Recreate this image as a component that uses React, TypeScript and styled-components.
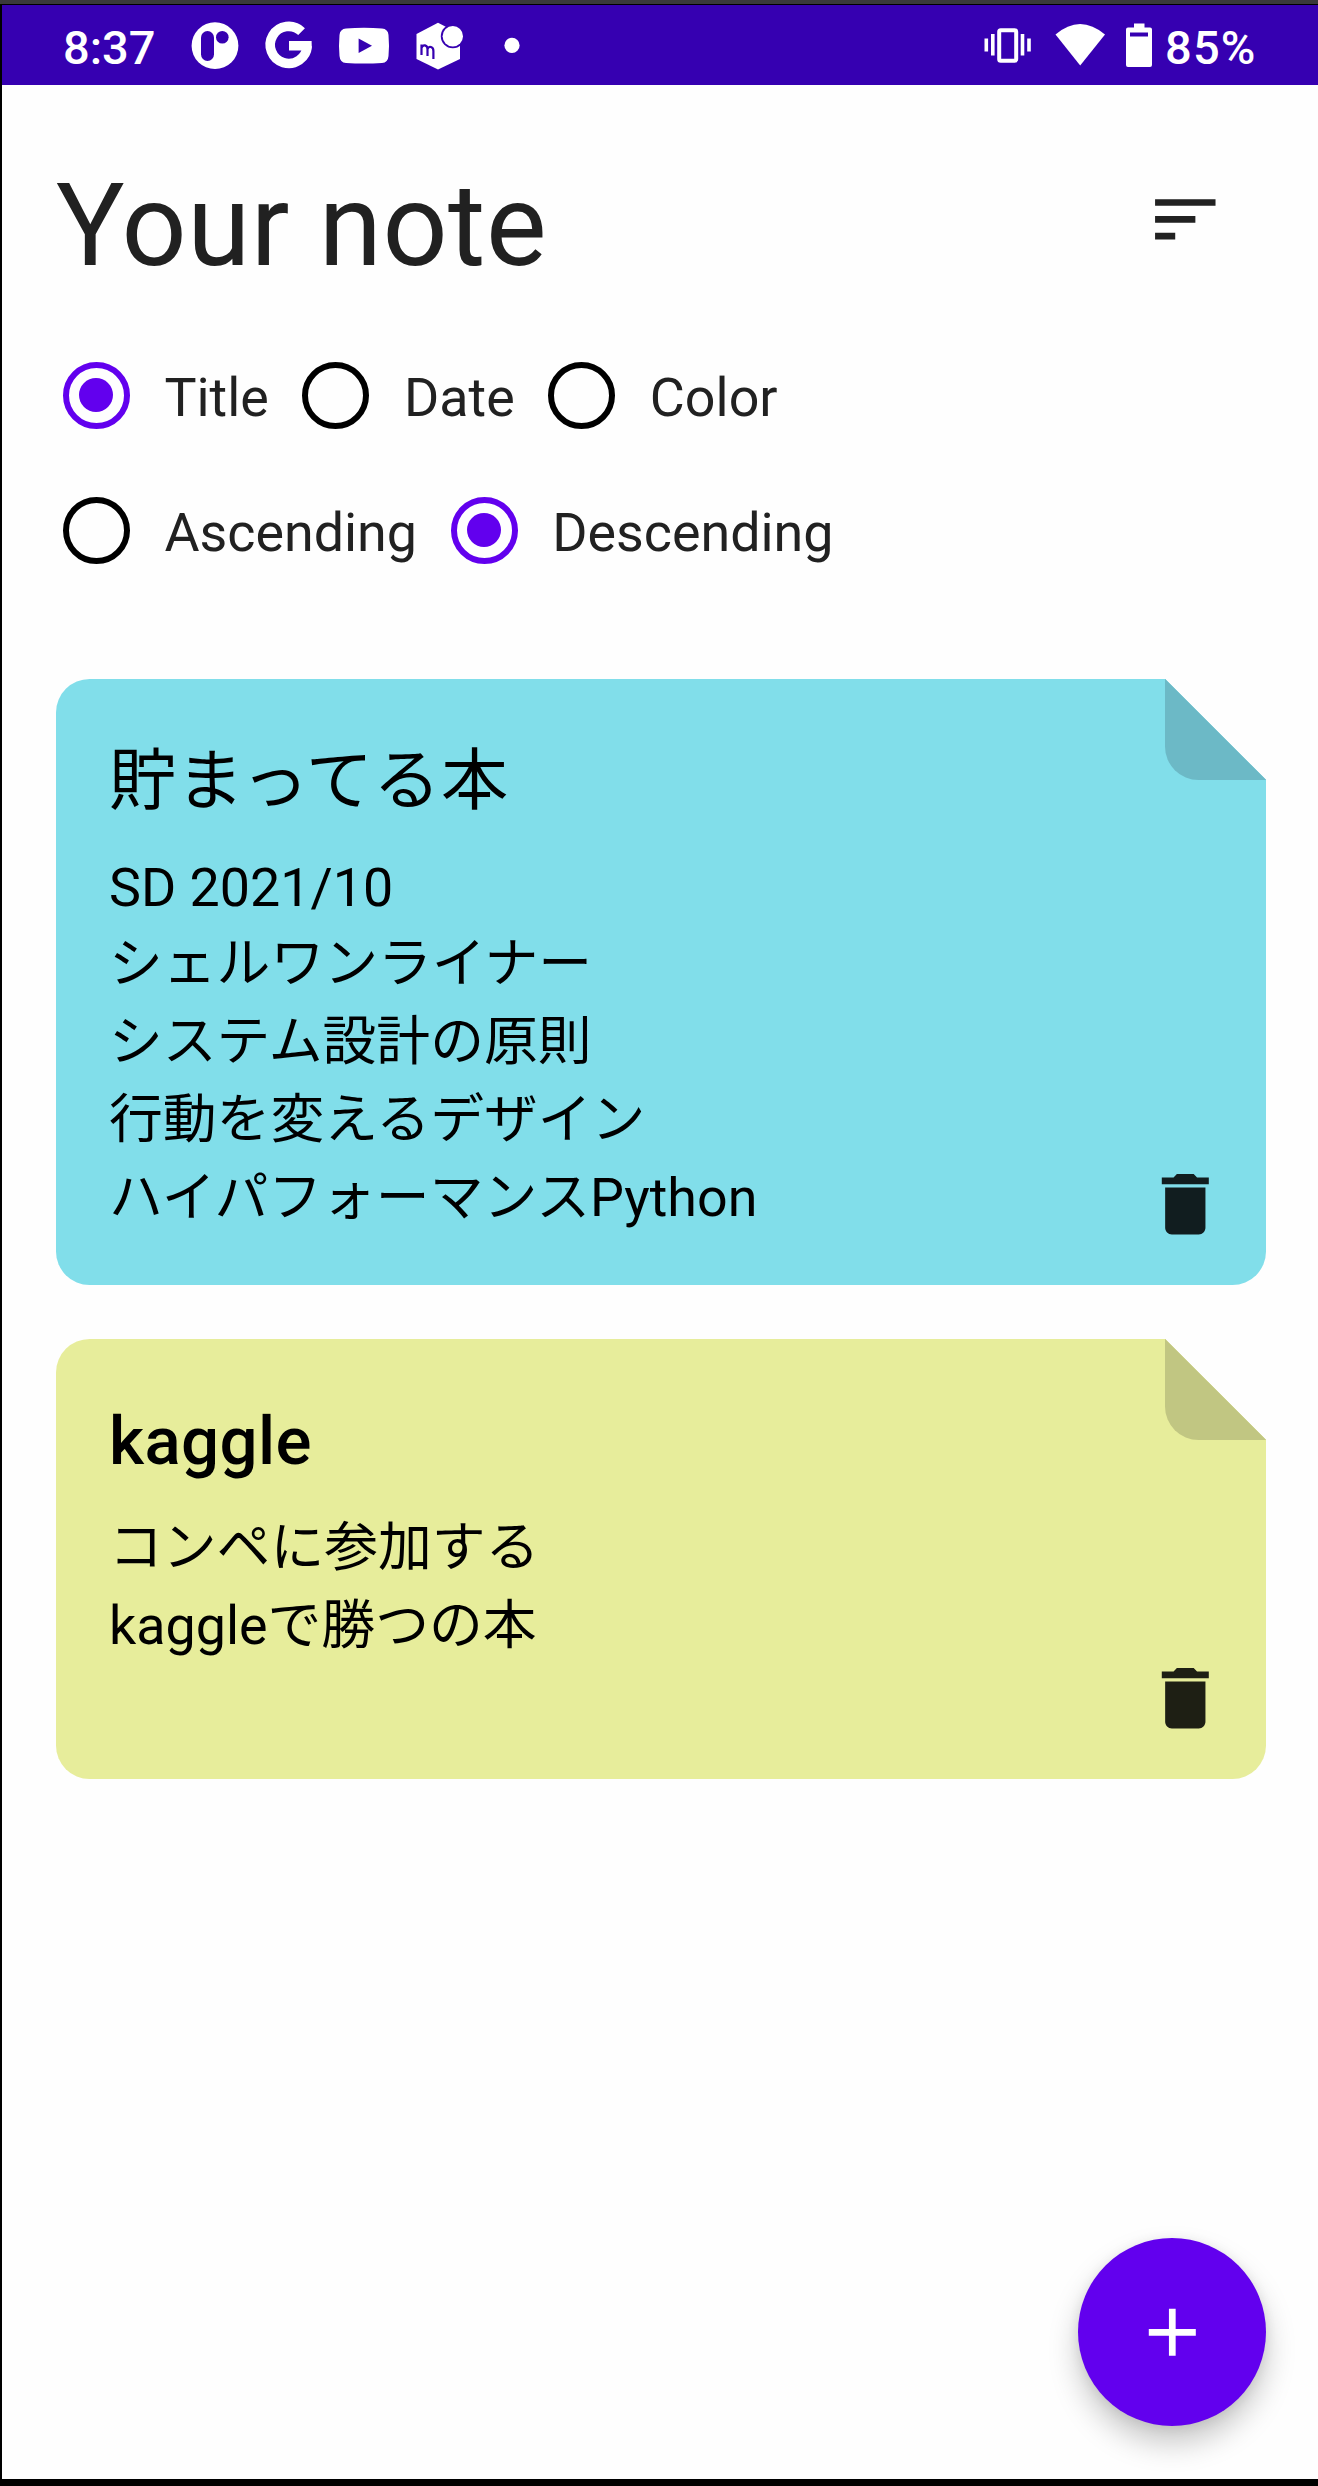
import React, { useState } from "react";
import styled, { createGlobalStyle } from "styled-components";

const GlobalStyle = createGlobalStyle`
  * { box-sizing: border-box; }
  body { margin: 0; background: #000; }
  button { border: 0; padding: 0; background: none; font: inherit; color: inherit; cursor: pointer; }
`;

const Frame = styled.div`
  width: 1318px;
  height: 2486px;
  padding: 1px 0 7px 2px;
  border-top: 4px solid #3a393b;
  background: #000;
  overflow: hidden;
  font-family: Roboto, "Noto Sans CJK JP", sans-serif;
`;

const Screen = styled.div`
  position: relative;
  display: flex;
  flex-direction: column;
  height: 2474px;
  background: #fefefe;
  color: #212121;
`;

const StatusBar = styled.header`
  display: flex;
  align-items: center;
  justify-content: space-between;
  height: 80px;
  padding: 0 60px 0 61px;
  background: #3600b1;
  color: #fff;
`;

const StatusGroup = styled.div`
  display: flex;
  align-items: center;
  svg { display: block; }
`;

const StatusText = styled.span<{ $width: number; $inset?: number }>`
  width: ${(p) => p.$width}px;
  padding: 6px 0 0 ${(p) => p.$inset ?? 0}px;
  font-size: 47px;
  line-height: 56px;
  font-weight: 500;
  letter-spacing: ${(p) => (p.$inset ? 1.2 : 0)}px;
  white-space: nowrap;
`;

const Content = styled.main`
  display: flex;
  flex-direction: column;
  padding: 72px 52px 0 54px;
`;

const TitleRow = styled.div`
  display: flex;
  justify-content: space-between;
  align-items: flex-start;
  height: 134px;
  padding: 2px 40px 0 0;
`;

const Heading = styled.h1`
  margin: 0;
  font-size: 114.3px;
  line-height: 134px;
  font-weight: 400;
  letter-spacing: 0.5px;
`;

const IconButton = styled.button`
  display: block;
  width: 80.6px;
  height: 80.6px;
  svg { display: block; width: 100%; height: 100%; }
`;

const SortButton = styled(IconButton)`
  margin-top: 20px;
`;

const SortPanel = styled.div`
  display: flex;
  flex-direction: column;
  gap: 68.2px;
  padding: 70.5px 0 0 6.8px;
`;

const RadioRow = styled.div`
  display: flex;
  gap: 33.6px;
  height: 67px;
`;

const RadioOption = styled.button`
  display: flex;
  align-items: center;
  gap: 34.6px;
  height: 67px;
`;

const RadioMark = styled.span<{ $on: boolean }>`
  display: grid;
  place-items: center;
  width: 67px;
  height: 67px;
  border: 6.8px solid ${(p) => (p.$on ? "#6200ee" : "#000")};
  border-radius: 50%;
  &::after {
    content: "";
    width: 34px;
    height: 34px;
    border-radius: 50%;
    background: ${(p) => (p.$on ? "#6200ee" : "transparent")};
  }
`;

const RadioLabel = styled.span`
  font-size: 53.8px;
  line-height: 64px;
  padding-top: 6px;
  white-space: nowrap;
`;

const NoteList = styled.div`
  display: flex;
  flex-direction: column;
  gap: 54px;
  padding-top: 115.3px;
`;

const Note = styled.article<{ $color: string; $height: number }>`
  position: relative;
  display: flex;
  justify-content: space-between;
  align-items: flex-end;
  height: ${(p) => p.$height}px;
  padding: 57px 40px 40px 53px;
  border-radius: 33.6px;
  background: ${(p) => p.$color};
  clip-path: polygon(0 0, calc(100% - 100.8px) 0, 100% 100.8px, 100% 100%, 0 100%);
`;

const Fold = styled.span<{ $color: string }>`
  position: absolute;
  top: 0;
  right: 0;
  width: 100.8px;
  height: 100.8px;
  border-bottom-left-radius: 33.6px;
  background: ${(p) => p.$color};
`;

const NoteText = styled.div`
  align-self: flex-start;
  color: #000;
`;

const NoteTitle = styled.h2<{ $weight: number }>`
  margin: 0 0 23px;
  font-size: 67.2px;
  line-height: 90px;
  font-weight: ${(p) => p.$weight};
  letter-spacing: 0.4px;
`;

const NoteLine = styled.p<{ $latin: boolean }>`
  margin: 0;
  padding-top: ${(p) => (p.$latin ? 3 : 0)}px;
  font-size: 53.8px;
  line-height: ${(p) => (p.$latin ? 72.8 : 78.2)}px;
  white-space: pre;
`;

const DeleteButton = styled(IconButton)`
  color: rgba(0, 0, 0, 0.87);
`;

const AddButton = styled.button`
  position: absolute;
  right: 52px;
  bottom: 53px;
  display: grid;
  place-items: center;
  width: 188px;
  height: 188px;
  border-radius: 50%;
  background: #6200ee;
  color: #fff;
  box-shadow: 0 17px 30px rgba(0, 0, 0, 0.22), 0 2px 12px rgba(0, 0, 0, 0.08);
  svg { width: 80.6px; height: 80.6px; }
`;

function NotificationIcons() {
  return (
    <svg width="330" height="80" viewBox="190 5 330 80" fill="#fff">
      <circle cx="215" cy="45.7" r="23.4" />
      <rect x="201" y="31" width="13" height="30" rx="6.5" fill="#3600b1" />
      <circle cx="222.3" cy="37.3" r="6.3" fill="#3600b1" />
      <path d="M301.6 31.6 A18.5 18.5 0 1 0 307.2 46" fill="none" stroke="#fff" strokeWidth="9.6" />
      <path d="M289 41h22.6q.5 5-.5 9.6H289z" />
      <path d="M346 28.5Q364 27 382 28.5Q388 29 388.500 35Q389.500 46 388.500 56Q388 62.500 382 63Q364 64 346 63Q340 62.500 339.500 56Q338.500 46 339.500 35Q340 29 346 28.500z" />
      <path d="M358.600 38.500L372 45.800L358.600 53z" fill="#3600b1" />
      <path d="M438 22.700L460 34V59L438 69.500L416.500 59V34z" />
      <circle cx="452.800" cy="36.300" r="12" fill="#3600b1" />
      <circle cx="452.800" cy="36.300" r="10.200" />
      <path d="M421.500 55V44.500M421.500 48q1-3 3.500-2.600q2.700.7 2.500 4v6.500M427.500 49q1-2.700 3.500-2q2.500.8 2.400 4v8" fill="none" stroke="#3600b1" strokeWidth="2.200" />
      <circle cx="512" cy="45.400" r="7.600" />
    </svg>
  );
}

function SystemIcons() {
  return (
    <svg width="176" height="80" viewBox="980 5 176 80" fill="#fff">
      <rect x="999.200" y="30.200" width="17" height="30.500" rx="1.500" fill="none" stroke="#fff" strokeWidth="4" />
      <path d="M984.500 38.500h3.600v13h-3.600zM991 34h3.600v21.500H991zM1020.700 34h3.600v21.500h-3.600zM1027.200 38.500h3.600v13h-3.600z" />
      <path d="M1055.500 34.600Q1080 13.500 1105 34.600L1080.200 65.500z" />
      <path fillRule="evenodd" d="M1134 23.500h10.500v4h5.500q2 0 2 2V65q0 2-2 2h-22q-2 0-2-2V29.500q0-2 2-2h6zM1130 32.500v4h18v-4z" />
    </svg>
  );
}

const SortIcon = () => (
  <svg viewBox="0 0 24 24" fill="#212121">
    <path d="M3 18h6v-2H3v2zM3 6v2h18V6H3zm0 7h12v-2H3v2z" />
  </svg>
);

const TrashIcon = () => (
  <svg viewBox="0 0 24 24" fill="currentColor">
    <path d="M6 19c0 1.100.9 2 2 2h8c1.100 0 2-.9 2-2V7H6v12zM19 4h-3.500l-1-1h-5l-1 1H5v2h14V4z" />
  </svg>
);

const PlusIcon = () => (
  <svg viewBox="0 0 24 24" fill="currentColor">
    <path d="M19 13h-6v6h-2v-6H5v-2h6V5h2v6h6v2z" />
  </svg>
);

function RadioGroup({ options, initial }: { options: string[]; initial: string }) {
  const [value, setValue] = useState(initial);
  return (
    <RadioRow role="radiogroup">
      {options.map((option) => (
        <RadioOption key={option} role="radio" aria-checked={value === option} onClick={() => setValue(option)}>
          <RadioMark $on={value === option} />
          <RadioLabel>{option}</RadioLabel>
        </RadioOption>
      ))}
    </RadioRow>
  );
}

const isLatin = (text: string) => /^[\x20-\x7e]+$/.test(text);

const notes = [
  {
    title: "貯まってる本",
    lines: ["SD 2021/10", "シェルワンライナー", "システム設計の原則", "行動を変えるデザイン", "ハイパフォーマンスPython"],
    color: "#81deea",
    fold: "#6cb9c6",
    height: 606,
  },
  {
    title: "kaggle",
    lines: ["コンペに参加する", "kaggleで勝つの本"],
    color: "#e7ed9b",
    fold: "#c1c682",
    height: 440,
  },
];

export default function App() {
  return (
    <Frame>
      <GlobalStyle />
      <Screen>
        <StatusBar>
          <StatusGroup>
            <StatusText $width={127}>8:37</StatusText>
            <NotificationIcons />
          </StatusGroup>
          <StatusGroup>
            <SystemIcons />
            <StatusText $width={102} $inset={9}>85%</StatusText>
          </StatusGroup>
        </StatusBar>
        <Content>
          <TitleRow>
            <Heading>Your note</Heading>
            <SortButton aria-label="Sort">
              <SortIcon />
            </SortButton>
          </TitleRow>
          <SortPanel>
            <RadioGroup options={["Title", "Date", "Color"]} initial="Title" />
            <RadioGroup options={["Ascending", "Descending"]} initial="Descending" />
          </SortPanel>
          <NoteList>
            {notes.map((note) => (
              <Note key={note.title} $color={note.color} $height={note.height}>
                <NoteText>
                  <NoteTitle $weight={isLatin(note.title) ? 500 : 400}>{note.title}</NoteTitle>
                  {note.lines.map((line) => (
                    <NoteLine key={line} $latin={isLatin(line)}>{line}</NoteLine>
                  ))}
                </NoteText>
                <DeleteButton aria-label="Delete note">
                  <TrashIcon />
                </DeleteButton>
                <Fold $color={note.fold} />
              </Note>
            ))}
          </NoteList>
        </Content>
        <AddButton aria-label="Add note">
          <PlusIcon />
        </AddButton>
      </Screen>
    </Frame>
  );
}
